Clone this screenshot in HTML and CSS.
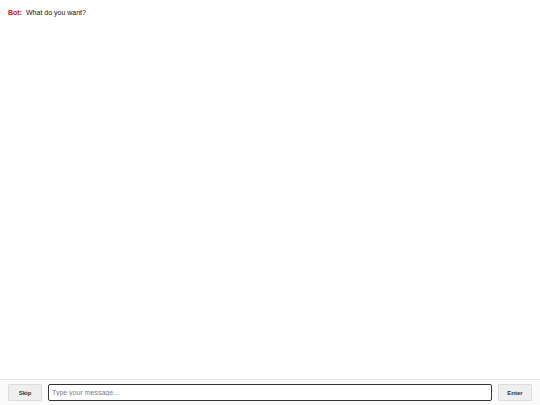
FILE: index.html
```html
<!DOCTYPE html>
<html>
<head>
<meta charset="utf-8">
<link rel="stylesheet" href="styles.css">
</head>
<body>
<div class="app">
  <div class="messages">
    <div class="msg"><span class="who">Bot:</span><span class="text">What do you want?</span></div>
  </div>
  <div class="bar">
    <button class="btn">Skip</button>
    <input class="field" type="text" placeholder="Type your message..." autofocus>
    <button class="btn">Enter</button>
  </div>
</div>
</body>
</html>
```
FILE: styles.css
```css
html, body { margin: 0; padding: 0; height: 100%; background: #fff; }
body { font-family: "Liberation Sans", Arial, sans-serif; color: #111; }
.app { display: flex; flex-direction: column; height: 405px; }
.messages { flex: 1; padding: 8px 8px; }
.msg { font-size: 7px; line-height: 9px; display: flex; gap: 4px; }
.who { color: #cc1111; font-weight: bold; }
.bar {
  display: flex; align-items: center; gap: 6px;
  height: 25px; padding: 0 8px;
  border-top: 1px solid #e2e2e2; background: #fafafa;
}
.btn {
  width: 34px; height: 17px; padding: 0;
  font-family: "Liberation Sans", Arial, sans-serif; font-size: 6px; font-weight: bold; color: #333;
  background: #efefef; border: 1px solid #dcdcdc; border-radius: 1px;
}
.field {
  flex: 1; height: 17px; box-sizing: border-box; padding: 0 3px;
  font-family: "Liberation Sans", Arial, sans-serif; font-size: 7px; color: #222;
  border: 1px solid #333; border-radius: 2px; outline: none; background: #fff;
  caret-color: #000;
}
.field::placeholder { color: #808080; }
```
